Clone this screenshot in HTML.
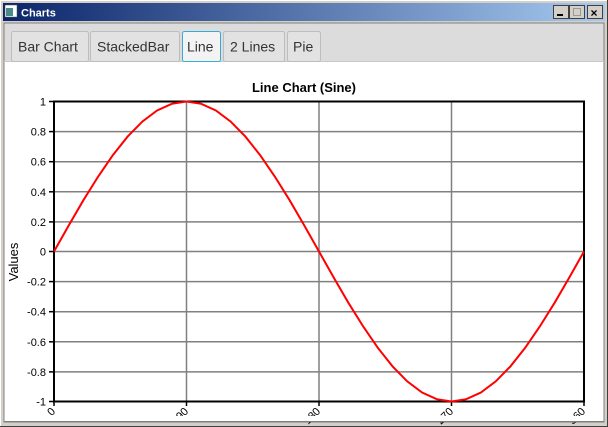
<!DOCTYPE html>
<html><head><style>
html,body{margin:0;padding:0;width:608px;height:427px;overflow:hidden;background:#d4d0c8}
</style></head><body>
<svg width="608" height="427" xmlns="http://www.w3.org/2000/svg" font-family="Liberation Sans, DejaVu Sans, sans-serif">
<defs><linearGradient id="tb" x1="0" x2="1"><stop offset="0" stop-color="#0a246a"/><stop offset="1" stop-color="#a6caf0"/></linearGradient></defs>
<rect x="0" y="0" width="608" height="427" fill="#d4d0c8"/>
<line x1="0" y1="0.5" x2="608" y2="0.5" stroke="#fff"/>
<line x1="0.5" y1="0" x2="0.5" y2="427" stroke="#fff"/>
<line x1="607.5" y1="0" x2="607.5" y2="427" stroke="#404040"/>
<line x1="0" y1="426.5" x2="608" y2="426.5" stroke="#404040"/>
<rect x="3" y="3" width="602" height="18" fill="url(#tb)"/>
<rect x="5" y="5" width="12" height="12" fill="#fff" stroke="#555" stroke-width="0.5"/>
<rect x="6" y="8" width="7" height="8" fill="#4a8a8a"/>
<text x="21" y="16.5" font-size="11" font-weight="bold" fill="#fff">Charts</text>
<g stroke-width="1">
<rect x="553.5" y="5.5" width="15" height="13" fill="#d4d0c8" stroke="#404040"/>
<rect x="569.5" y="5.5" width="15" height="13" fill="#d4d0c8" stroke="#404040"/>
<rect x="587.5" y="5.5" width="15" height="13" fill="#d4d0c8" stroke="#404040"/>
</g>
<rect x="557" y="14" width="6" height="2" fill="#000"/>
<rect x="573.5" y="8.5" width="7" height="7" fill="none" stroke="#999"/>
<text x="590.5" y="17" font-size="12" font-weight="bold" fill="#000">×</text>
<rect x="4" y="23" width="600" height="399" fill="#fff" stroke="#808080"/>
<rect x="4.5" y="23.5" width="599" height="38" fill="#dcdcdc"/>
<line x1="4" y1="61.5" x2="604" y2="61.5" stroke="#c8c8c8"/>
<g font-size="14" fill="#333">
<rect x="11.5" y="31.5" width="77" height="30" rx="2" fill="#e2e2e2" stroke="#bdbdbd"/>
<text x="18" y="51.5">Bar Chart</text>
<rect x="90.5" y="31.5" width="89" height="30" rx="2" fill="#e2e2e2" stroke="#bdbdbd"/>
<text x="97" y="51.5">StackedBar</text>
<rect x="182.5" y="31.5" width="38" height="30" rx="2" fill="#f3f3f3" stroke="#39a9d8"/>
<text x="187" y="51.5">Line</text>
<rect x="223.5" y="31.5" width="61" height="30" rx="2" fill="#e2e2e2" stroke="#bdbdbd"/>
<text x="230" y="51.5">2 Lines</text>
<rect x="287.5" y="31.5" width="33" height="30" rx="2" fill="#e2e2e2" stroke="#bdbdbd"/>
<text x="293" y="51.5">Pie</text>
</g>
<text x="304" y="92" font-size="13" font-weight="bold" text-anchor="middle" fill="#000">Line Chart (Sine)</text>
<g stroke="#808080" stroke-width="1.5">
<line x1="54" y1="131.6" x2="584" y2="131.6"/><line x1="54" y1="161.7" x2="584" y2="161.7"/>
<line x1="54" y1="191.8" x2="584" y2="191.8"/><line x1="54" y1="221.9" x2="584" y2="221.9"/>
<line x1="54" y1="251.5" x2="584" y2="251.5"/><line x1="54" y1="281.6" x2="584" y2="281.6"/>
<line x1="54" y1="311.7" x2="584" y2="311.7"/><line x1="54" y1="341.8" x2="584" y2="341.8"/>
<line x1="54" y1="371.9" x2="584" y2="371.9"/>
<line x1="186.5" y1="101.5" x2="186.5" y2="401.5"/><line x1="319" y1="101.5" x2="319" y2="401.5"/><line x1="451.5" y1="101.5" x2="451.5" y2="401.5"/>
</g>
<rect x="54" y="101.5" width="530" height="300" fill="none" stroke="#000" stroke-width="2"/>
<g stroke="#000" stroke-width="1.5">
<line x1="49" y1="101.5" x2="54" y2="101.5"/><line x1="49" y1="131.6" x2="54" y2="131.6"/><line x1="49" y1="161.7" x2="54" y2="161.7"/><line x1="49" y1="191.8" x2="54" y2="191.8"/><line x1="49" y1="221.9" x2="54" y2="221.9"/><line x1="49" y1="251.5" x2="54" y2="251.5"/><line x1="49" y1="281.6" x2="54" y2="281.6"/><line x1="49" y1="311.7" x2="54" y2="311.7"/><line x1="49" y1="341.8" x2="54" y2="341.8"/><line x1="49" y1="371.9" x2="54" y2="371.9"/><line x1="49" y1="401.5" x2="54" y2="401.5"/>
<line x1="54" y1="401" x2="54" y2="406"/><line x1="186.5" y1="401" x2="186.5" y2="406"/><line x1="319" y1="401" x2="319" y2="406"/><line x1="451.5" y1="401" x2="451.5" y2="406"/><line x1="584" y1="401" x2="584" y2="406"/>
</g>
<g font-size="11" fill="#000" text-anchor="end">
<text x="46" y="105.5">1</text><text x="46" y="135.6">0.8</text><text x="46" y="165.7">0.6</text><text x="46" y="195.8">0.4</text><text x="46" y="225.9">0.2</text><text x="46" y="255.5">0</text><text x="46" y="285.6">-0.2</text><text x="46" y="315.7">-0.4</text><text x="46" y="345.8">-0.6</text><text x="46" y="375.9">-0.8</text><text x="46" y="405.5">-1</text>
<text transform="translate(56,412) rotate(-45)">0</text>
<text transform="translate(189,412) rotate(-45)">90</text>
<text transform="translate(321,412) rotate(-45)">180</text>
<text transform="translate(454,412) rotate(-45)">270</text>
<text transform="translate(586,412) rotate(-45)">360</text>
</g>
<text transform="translate(18,262) rotate(-90)" font-size="13" text-anchor="middle" fill="#000">Values</text>
<rect x="5" y="416" width="598" height="5" fill="#fff"/>
<polyline fill="none" stroke="#f00" stroke-width="2" points="54,251.5 68.7,225.5 83.4,200.2 98.2,176.5 112.9,155.1 127.6,136.6 142.3,121.6 157.1,110.5 171.8,103.8 186.5,101.5 201.2,103.8 215.9,110.5 230.7,121.6 245.4,136.6 260.1,155.1 274.8,176.5 289.6,200.2 304.3,225.5 319,251.5 333.7,277.5 348.4,302.8 363.2,326.5 377.9,347.9 392.6,366.4 407.3,381.4 422.1,392.5 436.8,399.2 451.5,401.5 466.2,399.2 480.9,392.5 495.7,381.4 510.4,366.4 525.1,347.9 539.8,326.5 554.6,302.8 569.3,277.5 584,251.5"/>
<line x1="4" y1="421.5" x2="604" y2="421.5" stroke="#808080"/>
</svg>
</body></html>
